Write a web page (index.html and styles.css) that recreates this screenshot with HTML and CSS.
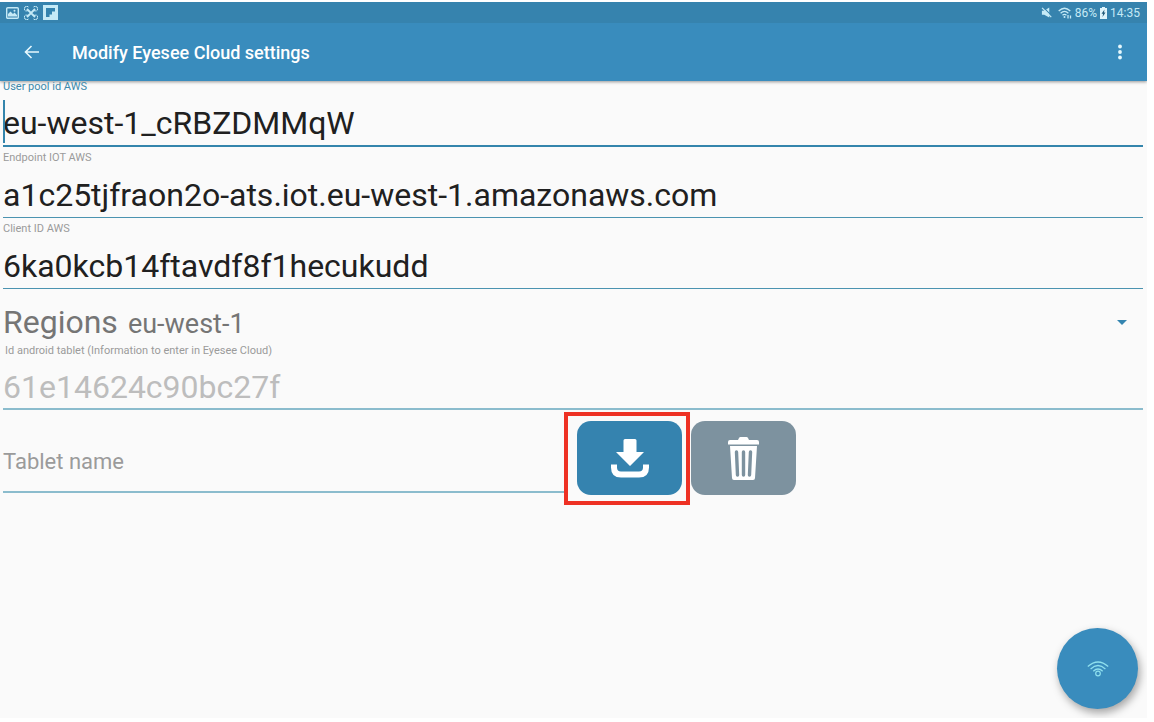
FILE: index.html
```
<!DOCTYPE html>
<html lang="en">

<head>
  <meta charset="utf-8">
  <meta name="viewport" content="width=device-width, initial-scale=1">
  <title>Modify Eyesee Cloud settings</title>
  <link rel="stylesheet" href="styles.css">
</head>

<body>
  <div class="app">
    <header>
      <div class="status-bar">
        <div class="status-group">
          <svg width="13" height="12" viewBox="0 0 13 12" fill="none" stroke="currentColor">
            <rect x="0.7" y="0.7" width="11.6" height="10.6" rx="1" stroke-width="1.4" />
            <path d="M2 9.500V7l2.500-2.500 2.500 2.500 1.500-1.500 2.500 2.500v1.500z" fill="currentColor" stroke="none" />
            <circle cx="8.500" cy="3.800" r="1" fill="currentColor" stroke="none" />
          </svg>
          <svg width="14" height="14" viewBox="0 0 14 14" fill="none" stroke="currentColor">
            <path d="M3 3l8 8M11 3l-8 8" stroke-width="1.800" />
            <path d="M1 4.500a2 2 0 0 1 3.500-3.500M9.500 1a2 2 0 0 1 3.500 3.500M13 9.500a2 2 0 0 1-3.500 3.500M4.500 13a2 2 0 0 1-3.500-3.500M1.500 5L5 4.500M12.500 5L9 4.500M1.500 9L5 9.500M12.500 9L9 9.500" stroke-width="1" />
          </svg>
          <svg width="15" height="15" viewBox="0 0 15 15">
            <path d="M0 0h15v15H0z" fill="#c5eaf6" />
            <path d="M3 3h9v3.500H9v3H6.500V12H3z" fill="#3383ae" />
          </svg>
        </div>
        <div class="status-group status-right">
          <svg class="mute" width="11" height="11" viewBox="0 0 12 12" fill="currentColor">
            <path d="M1 4h2.500L9 .5v11L3.500 8.500H1z" />
            <path d="M2.500 .5l9 9" stroke="#3683ae" stroke-width="1.200" />
            <path d="M1.200 1l10 10" stroke="currentColor" stroke-width="1.400" />
          </svg>
          <svg width="14" height="12" viewBox="0 0 14 12" fill="none" stroke="currentColor" stroke-width="1.300">
            <path d="M.7 4Q6.500-1.500 12.300 4M2.600 6.200q3.900-3.600 7.800 0M4.500 8.300q2-1.800 4 0" />
            <circle cx="6.500" cy="10" r="1" fill="currentColor" stroke="none" />
            <path d="M10 11.500V8M12.500 11.500V8.500" stroke-width="1.300" />
          </svg>
          <span>86%</span>
          <svg width="7" height="12" viewBox="0 0 7 12">
            <path d="M2 0h3v1h2v11H0V1h2z" fill="#e0f5fb" />
            <path d="M4.500 2.500L1.500 6.700h1.600L2.500 10l3-4.500H4z" fill="#235b79" />
          </svg>
          <span class="time">14:35</span>
        </div>
      </div>
      <div class="app-bar">
        <button type="button" class="icon-button back" aria-label="Back">
          <svg width="16" height="14" viewBox="0 0 16 14" fill="none" stroke="currentColor" stroke-width="1.600">
            <path d="M15 7H2M7.500 1L1.500 7l6 6" />
          </svg>
        </button>
        <h1>Modify Eyesee Cloud settings</h1>
        <button type="button" class="icon-button" aria-label="More options">
          <svg width="4" height="16" viewBox="0 0 4 16" fill="currentColor">
            <circle cx="2" cy="2.500" r="1.900" />
            <circle cx="2" cy="8" r="1.900" />
            <circle cx="2" cy="13.500" r="1.900" />
          </svg>
        </button>
      </div>
    </header>

    <form>
      <div class="field active">
        <label for="user-pool">User pool id AWS</label>
        <input id="user-pool" type="text" value="eu-west-1_cRBZDMMqW">
        <span class="caret"></span>
      </div>
      <div class="field">
        <label for="endpoint">Endpoint IOT AWS</label>
        <input id="endpoint" type="text" value="a1c25tjfraon2o-ats.iot.eu-west-1.amazonaws.com">
      </div>
      <div class="field">
        <label for="client-id">Client ID AWS</label>
        <input id="client-id" type="text" value="6ka0kcb14ftavdf8f1hecukudd">
      </div>
      <div class="region">
        <label for="region">Regions</label>
        <select id="region">
          <option>eu-west-1</option>
        </select>
        <svg class="arrow" width="10" height="5" viewBox="0 0 10 5">
          <path d="M0 0h10L5 5z" fill="#3485b0" />
        </svg>
      </div>
      <div class="field disabled">
        <label for="tablet-id">Id android tablet (Information to enter in Eyesee Cloud)</label>
        <input id="tablet-id" type="text" value="61e14624c90bc27f" disabled>
      </div>
      <div class="tablet-row">
        <input id="tablet-name" type="text" placeholder="Tablet name" aria-label="Tablet name">
        <div class="highlight">
          <button type="button" class="action download" aria-label="Download">
            <svg width="38" height="39" viewBox="0 0 38 39">
              <path d="M14 0h10q1.500 0 1.500 1.500V13H33L19 27 5 13h7.500V1.500Q12.500 0 14 0z" fill="#fff" />
              <path d="M3 25.500v3q0 7 7 7h18q7 0 7-7v-3" fill="none" stroke="#fff" stroke-width="6" />
            </svg>
          </button>
        </div>
        <button type="button" class="action delete" aria-label="Delete">
          <svg width="31" height="43" viewBox="0 0 31 43" fill="#fff">
            <path d="M2 3h8l1-2q.5-1 1.500-1h6q1 0 1.500 1l1 2h8q2 0 2 2v2.500H0V5q0-2 2-2z" />
            <path d="M2 9h27l-2 32q0 2-2 2H6q-2 0-2-2z" />
            <path d="M8.500 15l1 23M15.500 15v23M22.500 15l-1 23" stroke="#7d929f" stroke-width="3.400" stroke-linecap="round" />
          </svg>
        </button>
      </div>
    </form>

    <button type="button" class="fab" aria-label="Wifi">
      <svg width="22" height="16" viewBox="0 0 22 16" fill="none" stroke="currentColor" stroke-width="1.200">
        <path d="M.8 5.500Q11-3.500 21.200 5.500M3.600 8Q11 1 18.400 8M6.300 10.200q4.700-4.400 9.400 0" />
        <circle cx="11" cy="12.500" r="2.300" />
      </svg>
    </button>
  </div>
</body>

</html>
```
FILE: styles.css
```
* {
  box-sizing: border-box;
}

body {
  margin: 0;
  padding: 2px 7px 4px 0;
  background-color: #fff;
  font-family: Roboto, sans-serif;
}

.app {
  position: relative;
  min-height: calc(100vh - 6px);
  background-color: #fafafa;
  overflow: hidden;
}

button {
  display: flex;
  align-items: center;
  justify-content: center;
  padding: 0;
  border: none;
  cursor: pointer;
}

input,
select {
  padding: 0;
  border: none;
  border-radius: 0;
  outline: none;
  background-color: transparent;
  font-family: inherit;
}

header {
  background-color: #398cbd;
  box-shadow: 0 1px 3px rgba(0, 0, 0, 0.4);
}

.status-bar {
  display: flex;
  justify-content: space-between;
  height: 21px;
  padding: 0 7px 0 6px;
  background-color: #3683ae;
  color: #c5eaf6;
  font-size: 12px;
}

.status-group {
  display: flex;
  align-items: center;
  gap: 5px;
}

.status-right {
  gap: 3px;
}

.mute {
  margin-right: 3px;
}

.app-bar {
  display: flex;
  align-items: center;
  height: 58px;
  padding: 0 15px 0 12px;
  color: #fff;
}

.icon-button {
  width: 24px;
  height: 40px;
  background-color: transparent;
  color: #e6f8fd;
}

.back {
  width: 40px;
}

h1 {
  flex: 1;
  margin: 0 0 0 20px;
  font-size: 18px;
  font-weight: 500;
}

form {
  padding: 0 4px 0 3px;
}

.field {
  position: relative;
  display: flex;
  flex-direction: column;
  padding-top: 5px;
}

.field label {
  height: 12px;
  color: #9b9b9b;
  font-size: 11px;
  line-height: 12px;
}

.field input {
  height: 54px;
  padding-top: 8px;
  border-bottom: 1px solid #4b93b0;
  color: #202020;
  font-size: 32px;
}

.field.active {
  padding-top: 0;
}

.active label {
  color: #3c89ab;
}

.active input {
  border-bottom: 2px solid #3485ac;
}

.caret {
  position: absolute;
  left: 0;
  bottom: 4px;
  width: 2px;
  height: 43px;
  background-color: #3485ac;
}

.region {
  position: relative;
  display: flex;
  align-items: baseline;
  gap: 10px;
  height: 56px;
  padding-top: 14px;
  color: #757575;
}

.region label {
  font-size: 32px;
}

.region select {
  flex: 1;
  appearance: none;
  color: #757575;
  font-size: 27px;
}

.arrow {
  position: absolute;
  right: 16px;
  top: 31px;
}

.field.disabled {
  padding-top: 0;
}

.disabled label {
  padding-left: 2px;
}

.disabled input {
  height: 53px;
  border-bottom: 2px solid #8bbccd;
  color: #bdbdbd;
}

.tablet-row {
  display: flex;
  align-items: flex-start;
  gap: 9px;
  padding-top: 11px;
}

.tablet-row input {
  width: calc(50% - 5px);
  height: 72px;
  padding-top: 10px;
  border-bottom: 2px solid #8bbccd;
  font-size: 22px;
}

.tablet-row input::placeholder {
  color: #9b9b9b;
  opacity: 1;
}

.highlight {
  position: relative;
}

.highlight::after {
  content: "";
  position: absolute;
  inset: -9px -8px -10px -13px;
  border: 4px solid #ee3124;
  pointer-events: none;
}

.action {
  width: 105px;
  height: 74px;
  border-radius: 14px;
}

.download {
  background-color: #3583af;
}

.delete {
  background-color: #7d929f;
}

.fab {
  position: absolute;
  right: 9px;
  bottom: 9px;
  width: 81px;
  height: 81px;
  border-radius: 50%;
  background-color: #398cbd;
  color: #8fe0ee;
  box-shadow: 2px 4px 8px rgba(0, 0, 0, 0.35);
}
```
